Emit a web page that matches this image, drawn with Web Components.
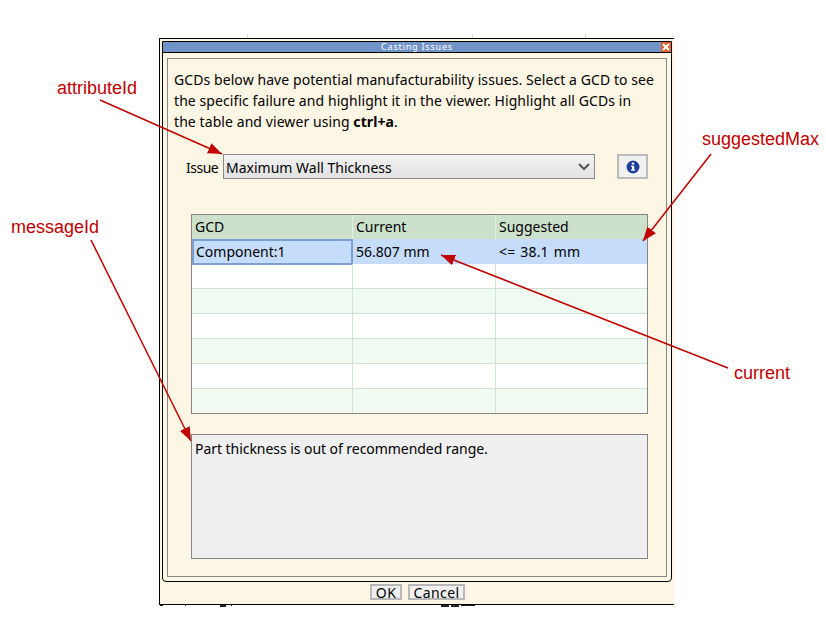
<!DOCTYPE html>
<html>
<head>
<meta charset="utf-8">
<title>Casting Issues</title>
<style>
  html, body { margin: 0; background: #fff; }
</style>
</head>
<body>
<casting-page>
  <casting-dialog heading="Casting Issues">
    <p slot="intro">GCDs below have potential manufacturability issues. Select a GCD to see<br>the specific failure and highlight it in the viewer. Highlight all GCDs in<br>the table and viewer using <b>ctrl+a</b>.</p>
    <issue-picker slot="picker" value="Maximum Wall Thickness"></issue-picker>
    <gcd-table slot="table"></gcd-table>
    <message-box slot="message">Part thickness is out of recommended range.</message-box>
    <dialog-button slot="actions" style="width:32px">OK</dialog-button>
    <dialog-button slot="actions" style="width:57px">Cancel</dialog-button>
  </casting-dialog>
  <callout-layer></callout-layer>
</casting-page>

<script>
const UI_FONT = `"Noto Sans", Tahoma, sans-serif`;

class CastingPage extends HTMLElement {
  constructor() {
    super();
    this.attachShadow({ mode: "open" });
    this.shadowRoot.innerHTML = `
      <style>
        :host {
          display: block;
          position: relative;
          width: 826px;
          height: 630px;
          overflow: hidden;
          padding: 38px 0 0 159px;
          box-sizing: border-box;
          font: 14px/21px ${UI_FONT};
          color: #000;
        }
      </style>
      <slot></slot>`;
  }
}

class CastingDialog extends HTMLElement {
  constructor() {
    super();
    this.attachShadow({ mode: "open" });
  }
  connectedCallback() {
    this.shadowRoot.innerHTML = `
      <style>
        :host {
          display: block;
          width: 515px;
          height: 567px;
          box-sizing: border-box;
          background: #fef6e4;
          border-top: 1px solid #000;
          border-left: 1px solid #000;
          border-bottom: 1px solid #000;
          padding: 2px 2px 0 2px;
        }
        .frame {
          height: 541px;
          box-sizing: border-box;
          border: 1px solid #000;
          border-radius: 0 0 4px 4px;
          display: flex;
          flex-direction: column;
        }
        .title {
          height: 10px;
          flex: none;
          background: #7094c8;
          border-bottom: 1px solid #000;
          color: #fff;
          font-size: 9px;
          line-height: 10px;
          letter-spacing: .8px;
          text-align: center;
          position: relative;
        }
        .close {
          position: absolute;
          right: 0;
          top: 0;
          width: 10px;
          height: 10px;
          display: block;
        }
        .panel {
          flex: 1;
          margin: 5px 4px 4px 4px;
          border: 1px solid #888;
          padding: 10px 6px 0 6px;
          display: flex;
          flex-direction: column;
        }
        ::slotted(p) {
          margin: 0;
          letter-spacing: .08px;
        }
        .actions {
          display: flex;
          gap: 6px;
          margin-top: 2px;
          padding-left: 208px;
        }
      </style>
      <div class="frame">
        <div class="title">${this.getAttribute("heading")}
          <svg class="close" viewBox="0 0 10 10">
            <rect width="10" height="10" fill="#e8602c"/>
            <path d="M2 2l6 6M8 2l-6 6" stroke="#fff" stroke-width="2"/>
          </svg>
        </div>
        <div class="panel">
          <slot name="intro"></slot>
          <slot name="picker"></slot>
          <slot name="table"></slot>
          <slot name="message"></slot>
        </div>
      </div>
      <div class="actions"><slot name="actions"></slot></div>`;
  }
}

class IssuePicker extends HTMLElement {
  constructor() {
    super();
    this.attachShadow({ mode: "open" });
  }
  connectedCallback() {
    this.shadowRoot.innerHTML = `
      <style>
        :host {
          display: flex;
          align-items: center;
          margin: 22px 0 0 12px;
          height: 25px;
        }
        .label { width: 37px; padding-top: 2px; letter-spacing: -.5px; }
        .select {
          width: 372px;
          height: 25px;
          box-sizing: border-box;
          border: 1px solid #8a8a8a;
          background: linear-gradient(#f2f2f2, #e2e2e2);
          padding-left: 2px;
          display: flex;
          justify-content: space-between;
          align-items: center;
        }
        .select span { padding-top: 2px; }
        .select svg { margin-right: 4px; }
        .info {
          margin-left: 22px;
          width: 31px;
          height: 25px;
          box-sizing: border-box;
          border: 2px solid #bcbcbc;
          background: #f0f0f0;
          display: flex;
          align-items: center;
          justify-content: center;
        }
        .info svg { background: #fff; }
      </style>
      <span class="label">Issue</span>
      <div class="select">
        <span>${this.getAttribute("value")}</span>
        <svg width="12" height="8" viewBox="0 0 12 8"><path d="M1 1l5 5 5-5" fill="none" stroke="#555" stroke-width="2"/></svg>
      </div>
      <div class="info">
        <svg width="14" height="14" viewBox="0 0 14 14">
          <circle cx="7" cy="7" r="6.5" fill="#1f3f9a"/>
          <rect x="5.8" y="2.6" width="2.4" height="2" fill="#fff"/>
          <path d="M5 5.8h3.2v3.8h1v1.2H5V9.6h1V7H5z" fill="#fff"/>
        </svg>
      </div>`;
  }
}

class GcdTable extends HTMLElement {
  constructor() {
    super();
    this.attachShadow({ mode: "open" });
  }
  connectedCallback() {
    const blank = Array.from({ length: 6 }, (_, i) =>
      `<div class="row ${i % 2 ? "even" : ""}"><span></span><span></span><span></span></div>`).join("");
    this.shadowRoot.innerHTML = `
      <style>
        :host {
          display: block;
          margin: 35px 0 0 17px;
          width: 457px;
          height: 200px;
          box-sizing: border-box;
          border: 1px solid #858585;
          background: #fff;
        }
        .row {
          display: grid;
          grid-template-columns: 161px 143px 1fr;
          height: 25px;
          box-sizing: border-box;
          border-bottom: 1px solid #cfe3d3;
        }
        .row:last-child { height: 24px; border-bottom: 0; }
        .row span {
          border-right: 1px solid #cfe3d3;
          padding-left: 3px;
          line-height: 26px;
        }
        .row span:last-child { border-right: 0; }
        .head { background: #cce0cc; height: 24px; border-bottom: 0; }
        .head span { border-right-color: #e4efe4; line-height: 24px; }
        .sel { background: #c5dcfb; border-bottom: 0; }
        .sel span { border-right: 0; }
        .sel .cur {
          border: 2px solid #7a9fd0;
          padding-left: 2px;
          line-height: 21px;
        }
        .sel .gap { word-spacing: 1px; letter-spacing: .2px; }
        .even { background: #f0faf1; }
      </style>
      <div class="row head"><span>GCD</span><span>Current</span><span>Suggested</span></div>
      <div class="row sel"><span class="cur">Component:1</span><span>56.807 mm</span><span class="gap">&lt;= 38.1 mm</span></div>
      ${blank}`;
  }
}

class MessageBox extends HTMLElement {
  constructor() {
    super();
    this.attachShadow({ mode: "open" });
    this.shadowRoot.innerHTML = `
      <style>
        :host {
          display: block;
          margin: 20px 0 0 17px;
          width: 457px;
          height: 125px;
          box-sizing: border-box;
          border: 1px solid #858585;
          background: #efefef;
          padding: 3px 3px;
          letter-spacing: -.05px;
        }
      </style>
      <slot></slot>`;
  }
}

class DialogButton extends HTMLElement {
  constructor() {
    super();
    this.attachShadow({ mode: "open" });
    this.shadowRoot.innerHTML = `
      <style>
        :host {
          display: block;
          height: 16px;
          box-sizing: border-box;
          border: 2px solid #b8b8b8;
          background: #f0f0f0;
          text-align: center;
          line-height: 14px;
          letter-spacing: .4px;
        }
      </style>
      <slot></slot>`;
  }
}

class CalloutLayer extends HTMLElement {
  constructor() {
    super();
    this.attachShadow({ mode: "open" });
    this.shadowRoot.innerHTML = `
      <style>
        :host { position: absolute; inset: 0; pointer-events: none; }
        svg { position: absolute; inset: 0; }
        text { font: 18px "Liberation Sans", Arial, sans-serif; fill: #c00000; }
        line { stroke: #c00000; stroke-width: 1.5; marker-end: url(#tip); }
      </style>
      <svg width="826" height="630">
        <defs>
          <marker id="tip" markerUnits="userSpaceOnUse" markerWidth="15" markerHeight="11" refX="14" refY="5.5" orient="auto">
            <path d="M0 0L14 5.5L0 11z" fill="#c00000"/>
          </marker>
        </defs>
        <!-- bits of the window behind the dialog -->
        <g fill="#d9d9d9">
          <rect x="247" y="34" width="1" height="4"/>
          <rect x="472" y="34" width="1" height="4"/>
          <rect x="585" y="34" width="1" height="4"/>
        </g>
        <g fill="#222">
          <rect x="160" y="605" width="3" height="1"/>
          <rect x="185" y="605" width="1" height="1"/>
          <rect x="220" y="605" width="6" height="2"/>
          <rect x="231" y="605" width="1" height="1"/>
          <rect x="441" y="605" width="8" height="2"/>
          <rect x="451" y="605" width="8" height="2"/>
          <rect x="461" y="605" width="14" height="1"/>
        </g>
        <text x="57" y="94">attributeId</text>
        <text x="11" y="233">messageId</text>
        <text x="702" y="145">suggestedMax</text>
        <text x="734" y="379">current</text>
        <line x1="100" y1="100" x2="222" y2="154"/>
        <line x1="91" y1="240" x2="191" y2="441"/>
        <line x1="711" y1="154" x2="643" y2="241"/>
        <line x1="728" y1="368" x2="441" y2="255"/>
      </svg>`;
  }
}

customElements.define("casting-page", CastingPage);
customElements.define("casting-dialog", CastingDialog);
customElements.define("issue-picker", IssuePicker);
customElements.define("gcd-table", GcdTable);
customElements.define("message-box", MessageBox);
customElements.define("dialog-button", DialogButton);
customElements.define("callout-layer", CalloutLayer);
</script>
</body>
</html>
